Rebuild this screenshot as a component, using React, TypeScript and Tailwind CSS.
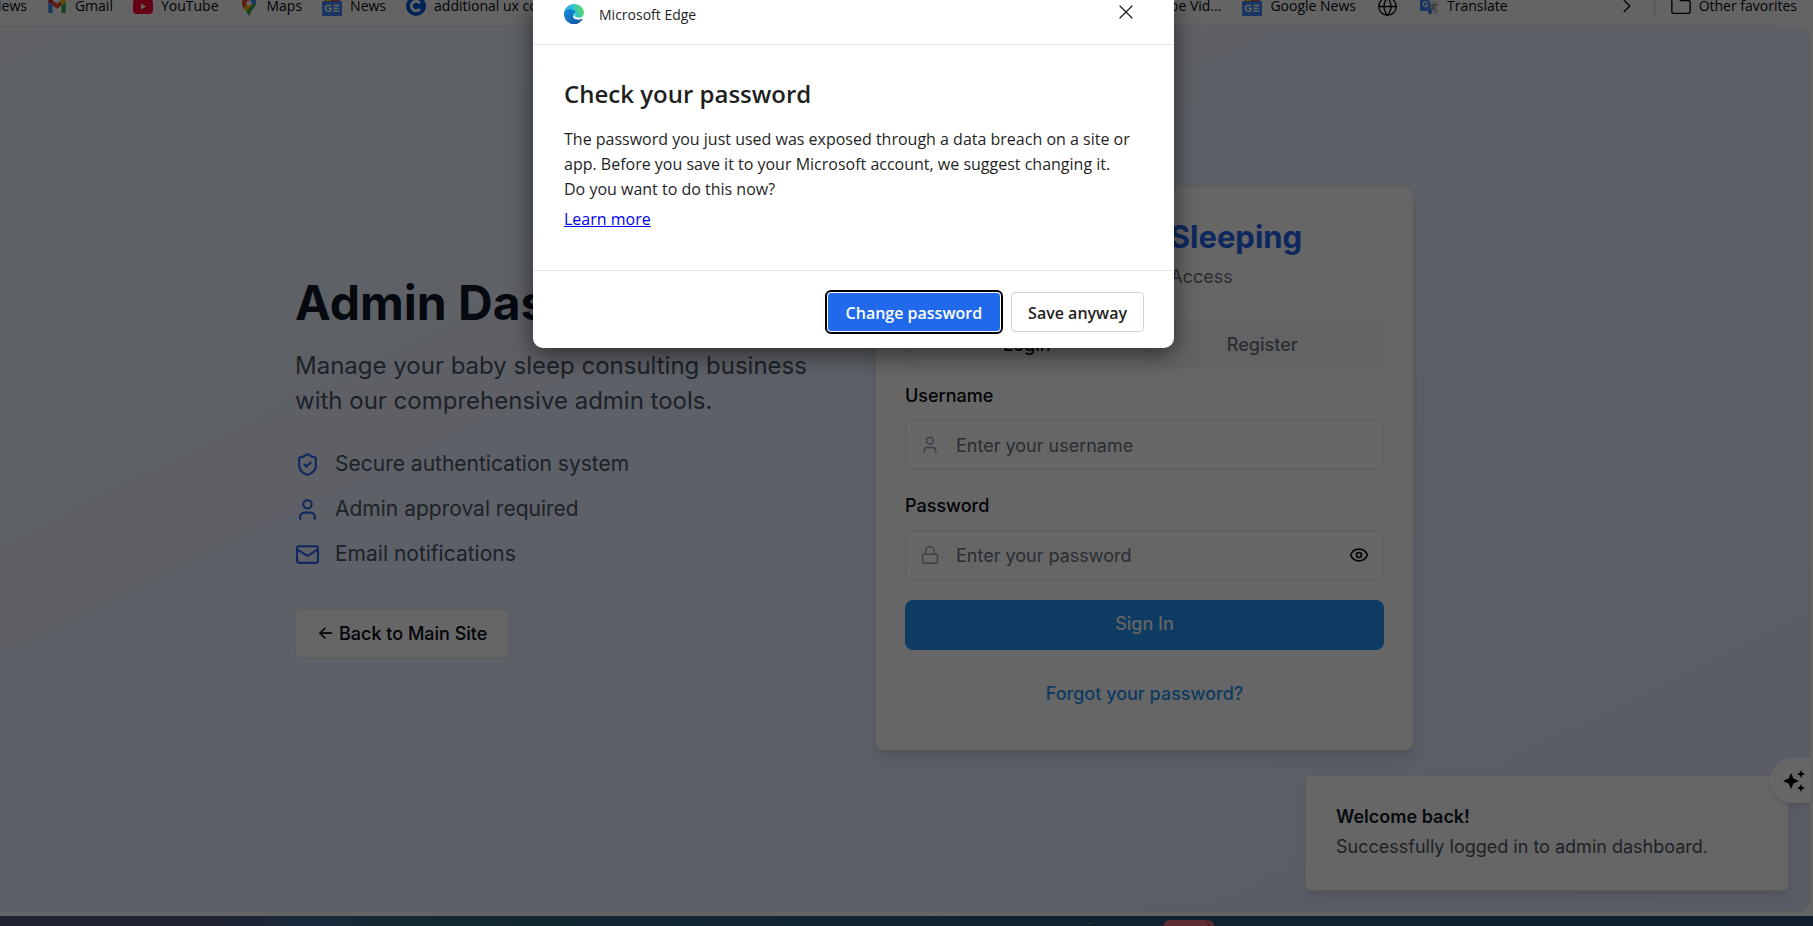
import React from "react";
import { ChevronRight, Eye, Folder, Globe, Lock, Mail, ShieldCheck, User, X } from "lucide-react";

const pageFont = "font-['Inter',sans-serif]";
const chromeFont = "font-['Open_Sans',sans-serif]";

function GmailIcon() {
  return (
    <svg width="18" height="14" viewBox="0 0 20 16" aria-hidden="true">
      <path d="M0 3v11.5C0 15.3.7 16 1.5 16H5V7L0 3Z" fill="#4285f4" />
      <path d="M15 7v9h3.5c.8 0 1.500-.7 1.500-1.500V3l-5 4Z" fill="#34a853" />
      <path d="M5 7V1.500l5 3.900 5-3.900V7l-5 4-5-4Z" fill="#ea4335" />
      <path d="M0 2.500V3l5 4V1.300L3.500.4C2-.6 0 .5 0 2.500Z" fill="#c5221f" />
      <path d="M20 2.500V3l-5 4V1.300l1.500-.9C18-.6 20 .5 20 2.500Z" fill="#fbbc04" />
    </svg>
  );
}

function YouTubeIcon() {
  return (
    <svg width="20" height="15" viewBox="0 0 20 15" aria-hidden="true">
      <rect width="20" height="15" rx="4" fill="#ff0033" />
      <path d="M8 4.500v6l5-3-5-3Z" fill="#fff" />
    </svg>
  );
}

function MapsIcon() {
  return (
    <svg width="14" height="20" viewBox="0 0 14 20" aria-hidden="true">
      <path d="M7 0a7 7 0 0 1 7 7c0 4-4 6-5.500 10.500L7 20l-1.500-2.500C5 15 0 11 0 7a7 7 0 0 1 7-7Z" fill="#34a853" />
      <path d="M0 7c0 2 1 4 2 5.200L9 4 4 1C1.500 2.200 0 4.500 0 7Z" fill="#ea4335" />
      <path d="M2 12.200 8 5l3 3-6.500 7L2 12.200Z" fill="#fbbc04" />
      <path d="M9 0c3 .8 5 3.300 5 7l-3 2-4-4 2-5Z" fill="#4285f4" />
      <circle cx="7" cy="7" r="2.500" fill="#fff" />
    </svg>
  );
}

function NewsIcon() {
  return (
    <svg width="20" height="20" viewBox="0 0 20 20" aria-hidden="true">
      <path d="M2 0h16v6H2z" fill="#fbbc04" />
      <path d="M10 1l8 2v4h-9z" fill="#ea4335" />
      <rect y="5" width="20" height="15" rx="1" fill="#4285f4" />
      <path d="M8.800 10.300a3 3 0 1 0 .2 3.500V12.200H6.500M11.500 9.500h6M11.500 12.200h5M11.500 15h6" fill="none" stroke="#fff" strokeWidth="1.500" />
    </svg>
  );
}

function CoursesIcon() {
  return (
    <svg width="20" height="20" viewBox="0 0 20 20" aria-hidden="true">
      <circle cx="10" cy="10" r="10" fill="#0056d2" />
      <path d="M13.800 7.200a4.700 4.700 0 1 0 0 5.600" fill="none" stroke="#fff" strokeWidth="2.800" />
    </svg>
  );
}

function TranslateIcon() {
  return (
    <svg width="18" height="20" viewBox="0 0 18 20" aria-hidden="true">
      <rect x="7" y="5" width="11" height="13" rx="1" fill="#dcdcdc" />
      <path d="M11 9h6M14 8v1c0 3-2 5-3 5.500M12 10.500c1 2 2.500 3.500 4.500 4" fill="none" stroke="#607d8b" />
      <path d="M1 2h7.500L12 15H1a1 1 0 0 1-1-1V3a1 1 0 0 1 1-1Z" fill="#4285f4" />
      <path d="m8.500 15 1.500 4 2-4H8.500Z" fill="#1a4fc4" />
      <path d="M7.300 7a2.300 2.300 0 1 0 .3 1.800H5.500" fill="none" stroke="#fff" strokeWidth="1.200" />
    </svg>
  );
}

function EdgeLogo() {
  return (
    <svg width="20" height="20" viewBox="0 0 20 20" aria-hidden="true">
      <defs>
        <linearGradient id="edgeTop" x1="0" y1="0.600" x2="1" y2="0.300">
          <stop offset="0" stopColor="#1b9de2" />
          <stop offset="0.500" stopColor="#2bc3d2" />
          <stop offset="1" stopColor="#62d957" />
        </linearGradient>
        <linearGradient id="edgeBottom" x1="0" y1="0" x2="1" y2="1">
          <stop offset="0" stopColor="#1b8ddb" />
          <stop offset="1" stopColor="#0c4ea2" />
        </linearGradient>
      </defs>
      <path d="M0 10C0 4.500 4.500 0 10 0s10 4.200 10 8.700c0 3-2.300 5-5 5-2.500 0-4.200-.9-4.200-1.900 0-.7.800-1 .8-2.200L7 16 0 10Z" fill="url(#edgeTop)" />
      <path d="M0 9.500C.6 6.500 4 4.800 7.200 5.200c2.600.3 4.200 1.900 4.300 3.500C10 8.200 8.600 9.600 8.600 11.500c0 3.200 4.400 5.300 9.200 3.500.5-.2.900.2.600.6A10 10 0 0 1 0 9.500Z" fill="url(#edgeBottom)" />
    </svg>
  );
}

function Sparkles() {
  return (
    <svg width="24" height="24" viewBox="0 0 24 24" fill="currentColor" aria-hidden="true">
      <path d="m9 4 2.400 5.600L17 12l-5.600 2.400L9 20l-2.400-5.600L1 12l5.600-2.400L9 4ZM19 1l1.200 2.800L23 5l-2.800 1.200L19 9l-1.200-2.800L15 5l2.800-1.200L19 1ZM19 15l1.200 2.800L23 19l-2.800 1.200L19 23l-1.200-2.800L15 19l2.800-1.200L19 15Z" />
    </svg>
  );
}

function Bookmark({ icon, label }: { icon?: React.ReactNode; label: string }) {
  return (
    <a href="#bookmark" className="flex shrink-0 items-center gap-2 whitespace-nowrap">
      {icon && <span className="flex w-5 justify-center">{icon}</span>}
      <span>{label}</span>
    </a>
  );
}

function BookmarksBar() {
  return (
    <nav className={`${chromeFont} flex h-[26px] items-center justify-between overflow-hidden pb-[14px] text-[14px] leading-5 text-gray-950`}>
      <div className="-ml-[9px] flex items-center gap-5">
        <Bookmark label="News" />
        <Bookmark icon={<GmailIcon />} label="Gmail" />
        <Bookmark icon={<YouTubeIcon />} label="YouTube" />
        <Bookmark icon={<MapsIcon />} label="Maps" />
        <Bookmark icon={<NewsIcon />} label="News" />
        <Bookmark icon={<CoursesIcon />} label="additional ux courses" />
      </div>
      <div className="flex items-center gap-[108px] pr-4">
        <div className="flex items-center gap-[21px]">
          <Bookmark label="YouTube Vid..." />
          <Bookmark icon={<NewsIcon />} label="Google News" />
          <Globe size={21} strokeWidth={1.5} />
          <Bookmark icon={<TranslateIcon />} label="Translate" />
        </div>
        <div className="flex items-center gap-4">
          <ChevronRight size={22} strokeWidth={1.5} />
          <span className="h-5 w-px bg-gray-300" />
          <Bookmark icon={<Folder size={22} strokeWidth={1.5} className="shrink-0" />} label="Other favorites" />
        </div>
      </div>
    </nav>
  );
}

const features = [
  { icon: ShieldCheck, text: "Secure authentication system" },
  { icon: User, text: "Admin approval required" },
  { icon: Mail, text: "Email notifications" },
];

function Intro() {
  return (
    <section className="flex flex-col items-start pb-[6px]">
      <h1 className="whitespace-nowrap text-[48px] font-bold leading-[60px] text-gray-900">Admin Dashboard</h1>
      <p className="mt-[15px] text-[24px] leading-[35px] text-gray-600">
        Manage your baby sleep consulting business with our comprehensive admin tools.
      </p>
      <ul className="mt-[31px] flex flex-col gap-[15px]">
        {features.map(({ icon: Icon, text }) => (
          <li key={text} className="flex items-center gap-[15px] text-[21px] leading-[30px] text-gray-600">
            <Icon size={25} className="text-[#2563eb]" />
            {text}
          </li>
        ))}
      </ul>
      <a href="#main" className="mt-10 flex h-[49px] items-center rounded-md border border-gray-200 bg-white px-[21px] text-[18px] font-medium text-gray-950">
        ← Back to Main Site
      </a>
    </section>
  );
}

function LoginCard() {
  return (
    <section className="flex flex-col rounded-[10px] border border-gray-200 bg-white px-[29px] pb-[41px] pt-[30px] shadow-lg">
      <h2 className="text-center text-[31px] font-bold leading-10 text-[#2563eb]">Wonders of Sleeping</h2>
      <p className="mt-[5px] text-center text-[18px] leading-[30px] text-gray-500">Admin Portal Access</p>
      <div className="mt-[27px] grid h-[50px] grid-cols-2 rounded-lg bg-[#f6f8fa] p-1 text-[18px] font-medium text-gray-500">
        <button className="rounded-md bg-white text-gray-950 shadow-xs">Login</button>
        <button>Register</button>
      </div>
      <form className="flex flex-col text-[18px]" onSubmit={(e) => e.preventDefault()}>
        <label htmlFor="username" className="mt-3 font-medium leading-[30px] text-gray-950">Username</label>
        <div className="mt-[9px] flex h-[50px] items-center gap-4 rounded-lg border border-gray-200 px-[14px]">
          <User size={20} strokeWidth={1.75} className="text-gray-400" />
          <input id="username" placeholder="Enter your username" className="min-w-0 flex-1 outline-none placeholder:text-gray-500" />
        </div>
        <label htmlFor="password" className="mt-[21px] font-medium leading-[30px] text-gray-950">Password</label>
        <div className="mt-[9px] flex h-[50px] items-center gap-4 rounded-lg border border-gray-200 px-[14px]">
          <Lock size={20} strokeWidth={1.75} className="text-gray-400" />
          <input id="password" type="password" placeholder="Enter your password" className="min-w-0 flex-1 outline-none placeholder:text-gray-500" />
          <button type="button" aria-label="Show password"><Eye size={20} className="text-gray-950" /></button>
        </div>
        <button className="mt-5 h-[50px] rounded-lg bg-[#2494f4] pb-1 font-medium text-gray-50">Sign In</button>
      </form>
      <a href="#forgot" className="mt-[29px] self-center text-[18px] font-medium leading-[30px] text-[#2494f4]">Forgot your password?</a>
    </section>
  );
}

function PasswordDialog() {
  return (
    <div className="absolute inset-0 flex items-start justify-center bg-black/60 pr-[106px]">
      <div role="dialog" aria-labelledby="dialog-title" className={`${chromeFont} w-[641px] overflow-hidden rounded-b-[10px] bg-white text-[#1f1f1f] shadow-[0_6px_24px_rgba(0,0,0,0.55)]`}>
        <header className="flex h-[45px] items-start justify-between border-b border-gray-200 pl-[31px] pr-9">
          <div className="flex h-7 items-center gap-[15px] text-[14px]">
            <EdgeLogo />
            Microsoft Edge
          </div>
          <button aria-label="Close"><X size={24} strokeWidth={1.25} /></button>
        </header>
        <div className="pb-[38px] pl-[31px] pr-[42px] pt-[31px]">
          <h2 id="dialog-title" className="text-[24px] font-semibold leading-9">Check your password</h2>
          <p className="mt-[15px] text-[16px] leading-[25px]">
            The password you just used was exposed through a data breach on a site or app. Before you save it to your Microsoft account, we suggest changing it. Do you want to do this now?
          </p>
          <a href="#learn" className="mt-[5px] block text-[16px] leading-[25px] text-[#0000ee] underline">Learn more</a>
        </div>
        <footer className="flex h-[78px] items-center justify-end gap-[10px] border-t border-gray-200 pr-[30px] pt-1 text-[16px] font-semibold">
          <button className="h-10 rounded-[4px] border border-white bg-[#2169eb] px-[18px] pt-[2px] text-white outline-2 outline-black">Change password</button>
          <button className="h-10 rounded-[4px] border border-gray-300 px-4 pt-[2px]">Save anyway</button>
        </footer>
      </div>
    </div>
  );
}

function DesktopEdge() {
  return (
    <div className="relative mt-1 h-[10px] shrink-0 overflow-hidden bg-[linear-gradient(to_right,#50587a_0%,#50587a_12%,#3c6498_17%,#32687c_21%,#285c78_50%,#284c78_100%)]">
      <svg className="absolute left-[60%] top-0" width="130" height="10" viewBox="0 0 130 10" aria-hidden="true">
        <path d="M0 10a6 2 0 0 1 8 0Z" transform="translate(-2 -2)" fill="#ffd21e" />
        <path d="M76 10c0-4 3-6 6-6h38c3 0 6 3 6 6Z" fill="#e8707c" />
        <path d="M117 4c3 1 4 3 4 6" fill="none" stroke="#8c3c50" />
      </svg>
    </div>
  );
}

export default function App() {
  return (
    <div className={`${pageFont} relative flex h-screen flex-col overflow-hidden bg-[#fcfbf9]`}>
      <BookmarksBar />
      <main className="relative mr-[3px] flex-1 rounded-r-xl border border-l-0 border-gray-200 bg-gradient-to-br from-blue-50 to-indigo-100 pl-[295px]">
        <div className="grid max-w-[1120px] grid-cols-[538px_539px] items-center gap-[42px] pt-[159px]">
          <Intro />
          <LoginCard />
        </div>
        <aside className="absolute bottom-5 right-5 h-[116px] w-[484px] rounded-md border border-gray-200 bg-white px-[30px] pt-[26px] text-[18px] leading-[30px] shadow-lg">
          <p className="font-semibold text-gray-900">Welcome back!</p>
          <p className="text-gray-600">Successfully logged in to admin dashboard.</p>
        </aside>
        <button aria-label="Copilot" className="absolute -right-px bottom-[108px] flex h-[45px] w-10 items-center justify-end rounded-l-full bg-white pr-1 text-black shadow-md">
          <Sparkles />
        </button>
      </main>
      <DesktopEdge />
      <PasswordDialog />
    </div>
  );
}
